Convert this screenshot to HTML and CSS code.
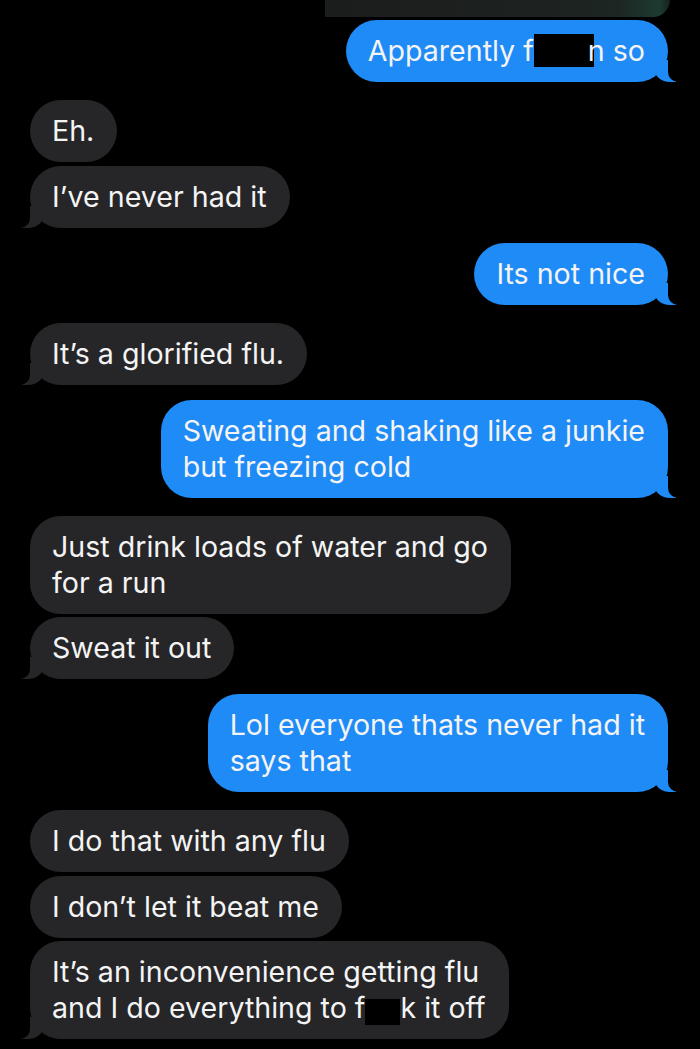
FILE: index.html
```html
<!DOCTYPE html>
<html>
<head>
<meta charset="utf-8">
<link rel="stylesheet" href="styles.css">
</head>
<body>
<div class="thread">
  <div class="photo"></div>
  <div class="msg sent tail g-first">Apparently f<span class="redact r1"></span>n so</div>
  <div class="msg recv g-big">Eh.</div>
  <div class="msg recv tail g-tight">I’ve never had it</div>
  <div class="msg sent tail g-mid">Its not nice</div>
  <div class="msg recv tail g-big">It’s a glorified flu.</div>
  <div class="msg sent tail g-mid">Sweating and shaking like a junkie<br>but freezing cold</div>
  <div class="msg recv g-big">Just drink loads of water and go<br>for a run</div>
  <div class="msg recv tail g-tight">Sweat it out</div>
  <div class="msg sent tail g-mid">Lol everyone thats never had it<br>says that</div>
  <div class="msg recv g-big">I do that with any flu</div>
  <div class="msg recv g-tight">I don’t let it beat me</div>
  <div class="msg recv tail g-tight">It’s an inconvenience getting flu<br>and I do everything to f<span class="redact r2"></span>k it off</div>
</div>
</body>
</html>
```
FILE: styles.css
```css
html, body {
  margin: 0;
  padding: 0;
  background: #000;
}
.thread {
  width: 700px;
  height: 1049px;
  overflow: hidden;
  box-sizing: border-box;
  padding: 0 32px 0 30px;
  display: flex;
  flex-direction: column;
  font-family: Inter, "Liberation Sans", sans-serif;
  font-size: 28.6px;
  line-height: 36px;
  color: #f4f4f4;
}
.photo {
  align-self: flex-end;
  width: 345px;
  height: 17px;
  margin-right: -2px;
  border-bottom-right-radius: 22px;
  background: linear-gradient(90deg, #1a1d1b 0%, #1d211f 60%, #1c2622 85%, #1e3a32 97%, #15201c 100%);
}
.msg {
  position: relative;
  padding: 13px 23px 13px 22px;
  border-radius: 31px;
  white-space: nowrap;
  max-width: max-content;
}
.sent {
  align-self: flex-end;
  background: #1f8bf7;
}
.recv {
  align-self: flex-start;
  background: #262628;
}
.g-first { margin-top: 3px; }
.g-big { margin-top: 18px; }
.g-mid { margin-top: 15px; }
.g-tight { margin-top: 3.5px; }

.tail.sent::before {
  content: "";
  position: absolute;
  bottom: 0;
  right: -8px;
  width: 22px;
  height: 22px;
  background: #1f8bf7;
  border-bottom-left-radius: 16px 14px;
}
.tail.sent::after {
  content: "";
  position: absolute;
  bottom: 0;
  right: -12px;
  width: 12px;
  height: 24px;
  background: #000;
  border-bottom-left-radius: 10px;
}
.tail.recv::before {
  content: "";
  position: absolute;
  bottom: 0;
  left: -8px;
  width: 22px;
  height: 22px;
  background: #262628;
  border-bottom-right-radius: 16px 14px;
}
.tail.recv::after {
  content: "";
  position: absolute;
  bottom: 0;
  left: -12px;
  width: 12px;
  height: 24px;
  background: #000;
  border-bottom-right-radius: 10px;
}
.redact {
  display: inline-block;
  background: #000;
  vertical-align: -6px;
}
.r1 {
  width: 60px;
  height: 33px;
  margin-right: -6px;
}
.r2 {
  width: 35px;
  height: 26px;
  margin-right: 0;
  vertical-align: -7px;
}
```
